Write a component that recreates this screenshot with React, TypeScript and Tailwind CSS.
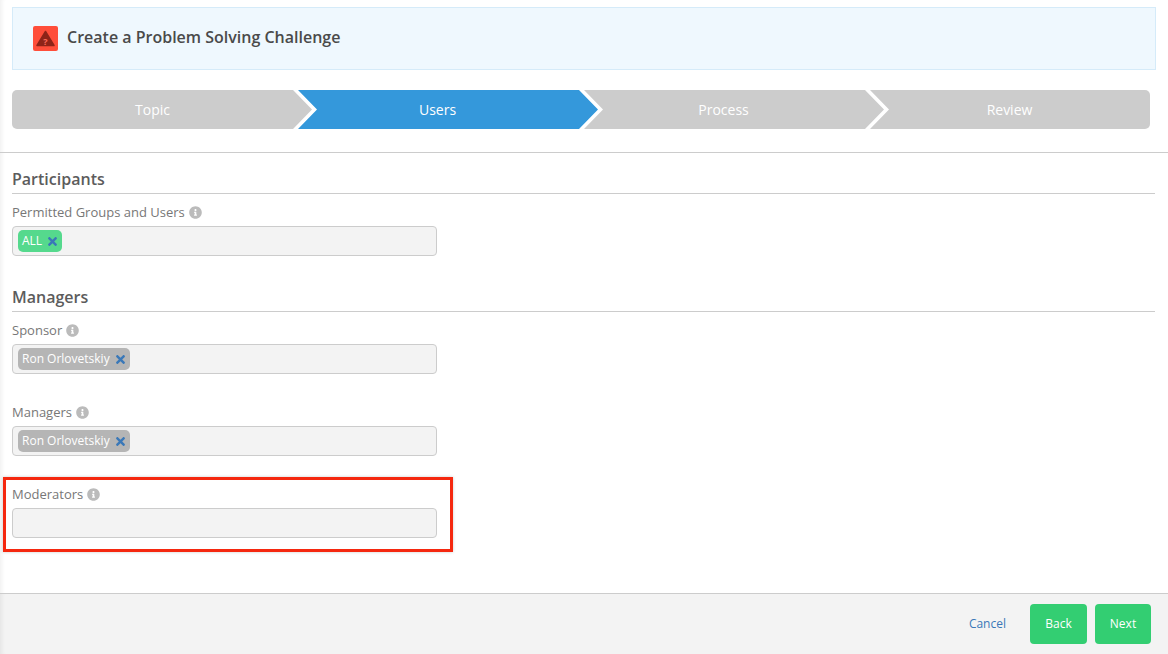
import { FaInfoCircle, FaTimes } from "react-icons/fa";

const Label = ({ text }: { text: string }) => (
  <div className="flex items-center gap-[4px] h-[18px] text-[13px] leading-[18px] text-[#777]">
    <span>{text}</span>
    <FaInfoCircle className="text-[13px] text-[#bbb]" />
  </div>
);

const Tag = ({ text, green }: { text: string; green?: boolean }) => (
  <div
    className={`flex items-center h-[22px] rounded-[5px] pl-[4px] pr-[3px] gap-[4px] text-[12px] text-white ${
      green ? "bg-[#55d98d]" : "bg-[#b5b5b5]"
    }`}
  >
    <span>{text}</span>
    <FaTimes className="text-[13px] text-[#3a78b8]" />
  </div>
);

const Field = ({ tag, green }: { tag?: string; green?: boolean }) => (
  <div className="flex items-center w-[425px] h-[30px] mt-[5px] px-[5px] bg-[#f3f3f3] border border-[#ccc] rounded-[4px]">
    {tag && <Tag text={tag} green={green} />}
  </div>
);

const App = () => {
  return (
    <div className="flex flex-col h-[654px] w-[1168px] overflow-hidden bg-white font-['Open_Sans',sans-serif] shadow-[inset_5px_0_4px_-3px_rgba(0,0,0,0.06)]">
      {/* Banner */}
      <div className="flex items-center gap-[9px] h-[63px] mt-[7px] ml-[12px] mr-[12px] pl-[20px] bg-[#eff8fe] border border-[#d5ebf9]">
        <div className="flex items-center justify-center w-[25px] h-[25px] rounded-[2px] bg-[#ff4e3a]">
          <svg width="19" height="17" viewBox="0 0 19 17">
            <path
              d="M9.5 1.5 L18 15.5 L1 15.5 Z"
              fill="#8e2418"
              stroke="#8e2418"
              strokeWidth="1.5"
              strokeLinejoin="round"
            />
            <text
              x="9.5"
              y="14.5"
              textAnchor="middle"
              fontSize="9"
              fontWeight="700"
              fill="#ff6a58"
              fontFamily="'Open Sans', sans-serif"
            >
              ?
            </text>
          </svg>
        </div>
        <h1 className="mb-[4px] text-[16px] font-semibold text-[#4a4a4a]">
          Create a Problem Solving Challenge
        </h1>
      </div>

      {/* Steps */}
      <div className="flex h-[39px] mt-[20px] ml-[12px] text-[14px] text-white">
        <div className="flex items-center justify-center w-[300px] pr-[19px] rounded-l-[5px] bg-[#ccc] [clip-path:polygon(0_0,281px_0,300px_50%,281px_100%,0_100%)]">
          Topic
        </div>
        <div className="flex items-center justify-center w-[300px] -ml-[14px] pr-[21px] bg-[#3498db] [clip-path:polygon(0_0,281px_0,300px_50%,281px_100%,0_100%,19px_50%)]">
          Users
        </div>
        <div className="flex items-center justify-center w-[300px] -ml-[14px] pr-[21px] bg-[#ccc] [clip-path:polygon(0_0,281px_0,300px_50%,281px_100%,0_100%,19px_50%)]">
          Process
        </div>
        <div className="flex items-center justify-center w-[280px] -ml-[14px] pr-[1px] rounded-r-[5px] bg-[#ccc] [clip-path:polygon(0_0,100%_0,100%_100%,0_100%,19px_50%)]">
          Review
        </div>
      </div>

      <div className="h-px mt-[23px] bg-[#ccc]" />

      {/* Form */}
      <div className="flex-1 pl-[12px] pr-[13px]">
        <h2 className="h-[41px] pt-[15px] text-[16px] leading-[22px] font-semibold text-[#5c5c5c] border-b border-[#ccc]">
          Participants
        </h2>
        <div className="mt-[9px]">
          <Label text="Permitted Groups and Users" />
          <Field tag="ALL" green />
        </div>

        <h2 className="h-[36px] mt-[20px] pt-[10px] text-[16px] leading-[22px] font-semibold text-[#5c5c5c] border-b border-[#ccc]">
          Managers
        </h2>
        <div className="mt-[9px]">
          <Label text="Sponsor" />
          <Field tag="Ron Orlovetskiy" />
        </div>
        <div className="mt-[29px]">
          <Label text="Managers" />
          <Field tag="Ron Orlovetskiy" />
        </div>
        <div className="relative mt-[29px]">
          <Label text="Moderators" />
          <Field />
          {/* annotation box */}
          <div className="absolute -left-[9px] -top-[8px] w-[450px] h-[75px] border-[3px] border-[#f5280f] shadow-[0_0_3px_rgba(0,0,0,0.2)]" />
        </div>
      </div>

      {/* Footer */}
      <div className="flex items-center justify-end h-[61px] pr-[17px] bg-[#f3f3f3] border-t border-[#ccc] text-[12px] shadow-[inset_5px_0_4px_-3px_rgba(0,0,0,0.06)]">
        <a className="mr-[24px] text-[#3a78b8]">Cancel</a>
        <button className="w-[57px] h-[40px] mr-[8px] rounded-[4px] bg-[#33ce72] text-white">
          Back
        </button>
        <button className="w-[56px] h-[40px] rounded-[4px] bg-[#33ce72] text-white">
          Next
        </button>
      </div>
    </div>
  );
};

export default App;
